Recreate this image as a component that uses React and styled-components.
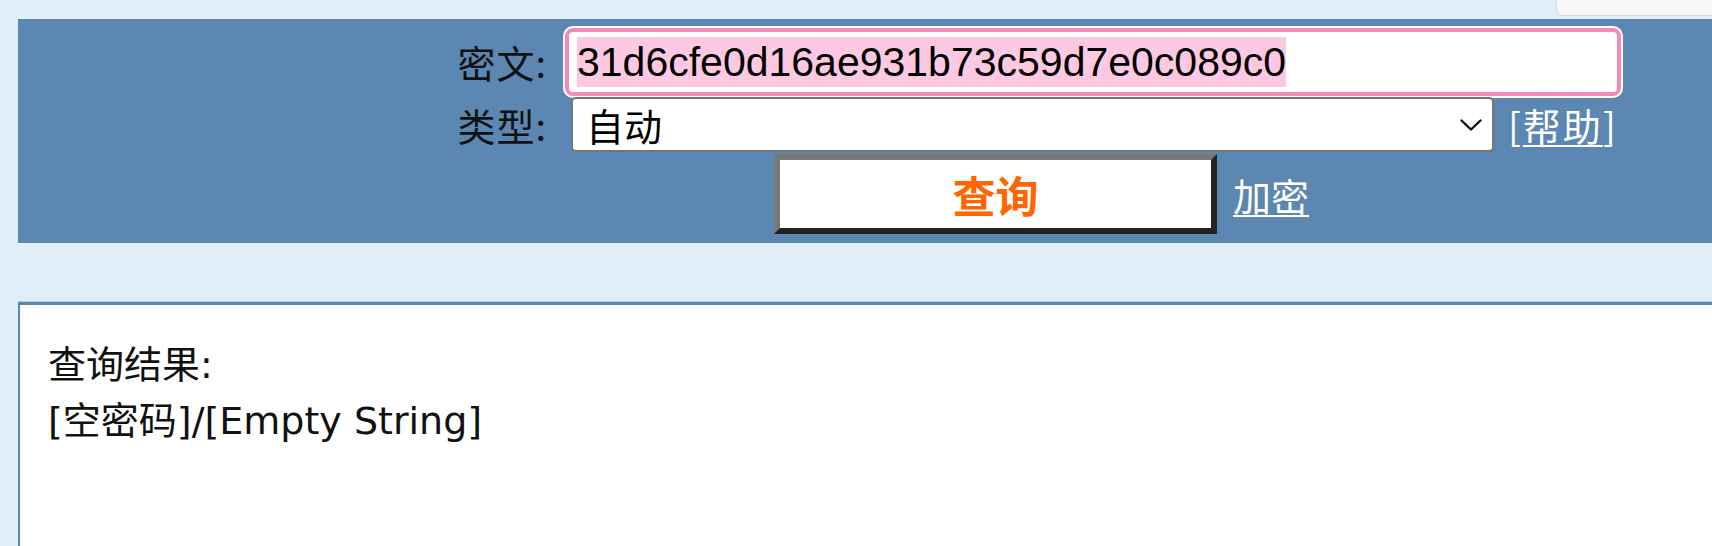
import styled, { createGlobalStyle } from 'styled-components';

const GlobalStyle = createGlobalStyle`
  html, body {
    margin: 0;
    padding: 0;
    background: #e1eef7;
    overflow: hidden;
  }
`;

const Page = styled.div`
  position: relative;
  width: 1800px;
  height: 546px;
  padding: 19px 0 0 18px;
  box-sizing: border-box;
  font-family: 'Noto Sans CJK SC', sans-serif;
`;

const Corner = styled.div`
  position: absolute;
  top: -1px;
  left: 1556px;
  width: 220px;
  height: 15px;
  background: #f6f7f8;
  border: 1px solid #d6dbe0;
  border-radius: 0 0 0 6px;
`;

const Panel = styled.div`
  background: #5b87b2;
  padding: 9px 0 9px 0;
  display: flex;
  flex-direction: column;
`;

const Row = styled.div`
  display: flex;
  align-items: center;
  margin-top: ${({ $top }) => $top || 0}px;
`;

const Label = styled.label`
  width: 529px;
  text-align: right;
  font-size: 38px;
  letter-spacing: 1px;
  color: #111;
  line-height: 1;
`;

const Field = styled.div`
  margin-left: 18px;
  width: 1056px;
  height: 68px;
  box-sizing: border-box;
  border: 4px solid #f589b8;
  border-radius: 8px;
  box-shadow: 0 0 0 2px #ffffff;
  background: #fff;
  display: flex;
  align-items: center;
  padding-left: 8px;
  font-family: 'Liberation Sans', Arial, sans-serif;
  font-size: 41px;
  color: #000;
`;

const Selected = styled.span`
  background: #fdc8e2;
  line-height: 50px;
`;

const Select = styled.div`
  margin-left: 24px;
  width: 923px;
  height: 55px;
  box-sizing: border-box;
  border: 2px solid #767676;
  border-radius: 5px;
  background: #fff;
  display: flex;
  align-items: center;
  justify-content: space-between;
  padding: 0 10px 0 13px;
  font-size: 38px;
  color: #000;
`;

const Aside = styled.span`
  margin-left: ${({ $gap }) => $gap}px;
  color: #fff;
  font-size: 38px;
  letter-spacing: ${({ $spread }) => $spread || 0}px;
`;

const TextLink = styled.a`
  color: #fff;
  text-decoration: underline;
  text-underline-offset: 4px;
  text-decoration-thickness: 2px;
  cursor: pointer;
`;

const SubmitButton = styled.button`
  margin-left: 756px;
  width: 443px;
  height: 80px;
  box-sizing: border-box;
  background: #fff;
  border: 6px solid;
  border-color: #777 #222 #222 #777;
  color: #ff6600;
  font-family: 'Noto Sans CJK SC', sans-serif;
  font-weight: 700;
  font-size: 43px;
  padding: 0;
`;

const Result = styled.div`
  margin-top: 59px;
  height: 300px;
  background: #fff;
  border-top: 3px solid #5b86b3;
  border-left: 2px solid #5b86b3;
  box-shadow: 0 -1px 0 #b7cce1;
  padding: 32px 28px;
  font-family: 'DejaVu Sans', 'Noto Sans CJK SC', sans-serif;
  font-size: 38px;
  line-height: 56px;
  color: #111;
`;

const Line = styled.div``;

const Chevron = () => (
  <svg width="22" height="12" viewBox="0 0 22 12" fill="none">
    <path d="M1.5 1.5 L11 10.5 L20.5 1.5" stroke="#111" strokeWidth="2.4" strokeLinecap="round" strokeLinejoin="round" />
  </svg>
);

const App = () => {
  return (
    <>
      <GlobalStyle />
      <Page>
        <Corner />
        <Panel>
          <Row>
            <Label>密文:</Label>
            <Field>
              <Selected>31d6cfe0d16ae931b73c59d7e0c089c0</Selected>
            </Field>
          </Row>
          <Row $top={1}>
            <Label>类型:</Label>
            <Select>
              <span>自动</span>
              <Chevron />
            </Select>
            <Aside $gap={14} $spread={2}>
              [<TextLink>帮助</TextLink>]
            </Aside>
          </Row>
          <Row $top={2}>
            <SubmitButton>查询</SubmitButton>
            <Aside $gap={16}>
              <TextLink>加密</TextLink>
            </Aside>
          </Row>
        </Panel>
        <Result>
          <Line>查询结果:</Line>
          <Line>[空密码]/[Empty String]</Line>
        </Result>
      </Page>
    </>
  );
};

export default App;
